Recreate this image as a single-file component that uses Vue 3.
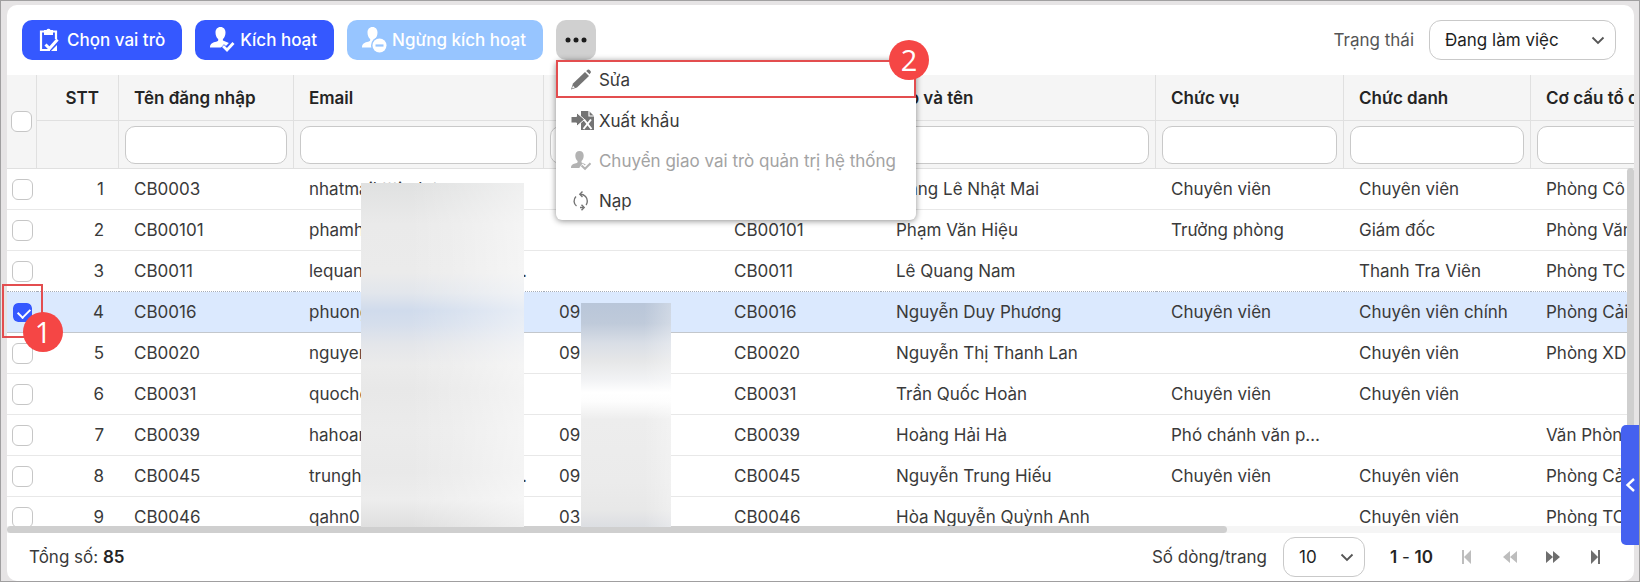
<script setup>
import { ref } from 'vue'

const status = ref('Đang làm việc')
const pageSize = ref('10')

const columns = [
  { key: 'login', label: 'Tên đăng nhập', cls: 'c-login' },
  { key: 'email', label: 'Email', cls: 'c-email' },
  { key: 'phone', label: '', cls: 'c-phone' },
  { key: 'code', label: '', cls: 'c-code' },
  { key: 'name', label: 'Họ và tên', cls: 'c-name' },
  { key: 'position', label: 'Chức vụ', cls: 'c-position' },
  { key: 'title', label: 'Chức danh', cls: 'c-title' },
  { key: 'unit', label: 'Cơ cấu tổ chức', cls: 'c-unit' },
]

const rows = ref([
  { code: 'CB0003', email: 'nhatmaiktttindvt', phone: '', name: 'Đặng Lê Nhật Mai', position: 'Chuyên viên', title: 'Chuyên viên', unit: 'Phòng Cô' },
  { code: 'CB00101', email: 'phamh', phone: '', name: 'Phạm Văn Hiệu', position: 'Trưởng phòng', title: 'Giám đốc', unit: 'Phòng Văn' },
  { code: 'CB0011', email: 'lequan', cut: true, phone: '', name: 'Lê Quang Nam', position: '', title: 'Thanh Tra Viên', unit: 'Phòng TC' },
  { code: 'CB0016', email: 'phuong', phone: '09', name: 'Nguyễn Duy Phương', position: 'Chuyên viên', title: 'Chuyên viên chính', unit: 'Phòng Cải', selected: true },
  { code: 'CB0020', email: 'nguyen', phone: '09', name: 'Nguyễn Thị Thanh Lan', position: '', title: 'Chuyên viên', unit: 'Phòng XD' },
  { code: 'CB0031', email: 'quocho', phone: '', name: 'Trần Quốc Hoàn', position: 'Chuyên viên', title: 'Chuyên viên', unit: '' },
  { code: 'CB0039', email: 'hahoan', phone: '09', name: 'Hoàng Hải Hà', position: 'Phó chánh văn phòng', title: '', unit: 'Văn Phòng' },
  { code: 'CB0045', email: 'trungh', cut: true, phone: '09', name: 'Nguyễn Trung Hiếu', position: 'Chuyên viên', title: 'Chuyên viên', unit: 'Phòng Cải' },
  { code: 'CB0046', email: 'qahn0', phone: '03', name: 'Hòa Nguyễn Quỳnh Anh', position: '', title: 'Chuyên viên', unit: 'Phòng TC' },
])
</script>

<template>
  <div class="page">
    <main class="card">
      <div class="toolbar">
        <button class="btn" type="button">
          <svg class="ico-clip" width="20" height="26" viewBox="0 0 20 26">
            <path d="M5 4.500H2V23h9M13.500 4.500H17V12" fill="none" stroke="#fff" stroke-width="2.200" />
            <path d="M5 3h2.500a2.200 2.200 0 0 1 4 0H14v5H5z" fill="#fff" />
            <path d="M6.500 17.500l4 4L18.500 12.500" fill="none" stroke="#fff" stroke-width="3" />
            <path d="M12 24l6-6v6z" fill="#fff" />
          </svg>
          <span>Chọn vai trò</span>
        </button>
        <button class="btn" type="button">
          <svg width="25" height="26" viewBox="0 0 25 26">
            <path d="M10.500 0c3.200 0 5 2.400 5 5.500 0 2.800-1 5.300-2.600 6.600v1.400l6 2.500-4.400 4.500H0c0-3.500 2-4.600 5-5.500 1.700-.5 3.200-.8 3.200-1.800v-1.100C6.500 10.800 5.500 8.300 5.500 5.500 5.500 2.400 7.300 0 10.500 0z" fill="#fff" />
            <path d="M12 19.500l4.800 4L23.500 16" fill="none" stroke="#3558ff" stroke-width="6" />
            <path d="M13 19l4 4L23.500 16" fill="none" stroke="#fff" stroke-width="2.800" />
          </svg>
          <span>Kích hoạt</span>
        </button>
        <button class="btn btn-off" type="button" disabled>
          <svg width="25" height="26" viewBox="0 0 25 26">
            <path d="M10.500 0c3.200 0 5 2.400 5 5.500 0 2.800-1 5.300-2.600 6.600v1.400l3 4-4 3H0c0-3.500 2-4.600 5-5.500 1.700-.5 3.200-.8 3.200-1.800v-1.100C6.500 10.800 5.500 8.300 5.500 5.500 5.500 2.400 7.300 0 10.500 0z" fill="#fff" />
            <circle cx="17.500" cy="18.500" r="8.500" fill="#97c5ff" />
            <circle cx="17.500" cy="18.500" r="7" fill="#fff" />
            <path d="M13.500 18.500h8" stroke="#97c5ff" stroke-width="2.200" />
          </svg>
          <span>Ngừng kích hoạt</span>
        </button>
        <div class="more-wrap">
          <button class="more" type="button" aria-label="Thêm">
            <svg width="22" height="6" viewBox="0 0 22 6" fill="#1c1c1c">
              <circle cx="3" cy="3" r="2.500" /><circle cx="11" cy="3" r="2.500" /><circle cx="19" cy="3" r="2.500" />
            </svg>
          </button>
          <div class="menu">
            <button type="button" class="marked">
              <svg width="24" height="22" viewBox="0 0 24 22" fill="#747474">
                <path d="M0 20.500l2-6L14 3l4 4L6 18.500z" />
                <path d="M15.200 1.900L17 .6c1-.7 3.500 1.800 2.800 3l-1.200 1.700z" />
                <path d="M.9 19.600l1.100-2.900 1.800 1.800z" fill="#fff" />
              </svg>
              <span>Sửa</span>
              <b class="badge badge-2">2</b>
            </button>
            <button type="button">
              <svg width="24" height="22" viewBox="0 0 24 22">
                <path d="M10 1h8l5 5v14H10z" fill="#747474" />
                <path d="M18 1v5h5" fill="none" stroke="#fff" stroke-width="1.200" />
                <path d="M0 6.500h5.500V2.500L13.500 9.500l-8 7V13H0z" fill="#747474" stroke="#fff" stroke-width="1" />
                <path d="M13 9.500l7.500 9.500M20 9.500L12.500 19" stroke="#fff" stroke-width="2" />
              </svg>
              <span>Xuất khẩu</span>
            </button>
            <button type="button" disabled>
              <svg width="24" height="22" viewBox="0 0 24 22">
                <path d="M8.500 1c2.700 0 4.200 2 4.200 4.600 0 2.300-.8 4.300-2.200 5.400v1.500l4.500 2-3 3.500H0c0-3 1.700-3.700 4-4.400 1.400-.4 2.600-.7 2.600-1.500V11C5.200 9.900 4.300 7.900 4.300 5.600 4.300 3 5.800 1 8.500 1z" fill="#b3b3b3" />
                <path d="M10 15.500l4 3.500 5.500-6" fill="none" stroke="#fff" stroke-width="5" />
                <path d="M10.500 15.500l3.500 3.300 5.500-5.600" fill="none" stroke="#b3b3b3" stroke-width="2" />
              </svg>
              <span>Chuyển giao vai trò quản trị hệ thống</span>
            </button>
            <button type="button">
              <svg width="24" height="22" viewBox="0 0 24 22" fill="none" stroke="#747474" stroke-width="1.400">
                <path d="M5.500 16A6.200 6.200 0 0 1 5 6.600M9 4.300c5 0 7.300 3.400 7.300 6.700 0 1.500-.4 3-1.200 4M12.500 17.500H9" />
                <path d="M11.500 1.500L8.800 4.300l2.700 2.800M10.500 14.700l2.700 2.800-2.700 2.800" />
              </svg>
              <span>Nạp</span>
            </button>
          </div>
        </div>
        <div class="status">
          <label for="status">Trạng thái</label>
          <div class="select">
            <select id="status" v-model="status"><option>Đang làm việc</option></select>
            <svg width="14" height="9" viewBox="0 0 14 9"><path d="M1.500 1.500L7 7l5.500-5.500" fill="none" stroke="#555" stroke-width="1.800" /></svg>
          </div>
        </div>
      </div>

      <div class="grid">
        <div class="viewport">
          <table>
            <colgroup>
              <col class="c-check"><col class="c-stt"><col v-for="c in columns" :key="c.key" :class="c.cls">
            </colgroup>
            <thead>
              <tr class="labels">
                <th rowspan="2" class="check"><input type="checkbox" aria-label="Chọn tất cả"></th>
                <th class="stt">STT</th>
                <th v-for="c in columns" :key="c.key" scope="col">{{ c.label }}</th>
              </tr>
              <tr class="filters">
                <td></td>
                <td v-for="c in columns" :key="c.key"><input type="text" :aria-label="'Lọc ' + (c.label || c.key)"></td>
              </tr>
            </thead>
            <tbody>
              <tr v-for="(r, i) in rows" :key="r.code" :class="{ selected: r.selected, before: i === 2 }">
                <td class="check"><input v-model="r.selected" type="checkbox" :aria-label="'Chọn ' + r.code"></td>
                <td class="stt">{{ i + 1 }}</td>
                <td>{{ r.code }}</td>
                <td><div class="email"><span>{{ r.email }}</span><span v-if="r.cut">.</span></div></td>
                <td>{{ r.phone }}</td>
                <td>{{ r.code }}</td>
                <td>{{ r.name }}</td>
                <td>{{ r.position }}</td>
                <td>{{ r.title }}</td>
                <td>{{ r.unit }}</td>
              </tr>
            </tbody>
          </table>
        </div>
        <div class="mask mask-email"></div>
        <div class="mask mask-phone"></div>
        <div class="vbar"></div>
        <div class="row-mark"><b class="badge badge-1">1</b></div>
      </div>
      <div class="hbar"><div class="thumb"></div></div>

      <footer>
        <div>Tổng số: <b>85</b></div>
        <div class="pager">
          <label for="size">Số dòng/trang</label>
          <div class="select small">
            <select id="size" v-model="pageSize"><option>10</option></select>
            <svg width="14" height="9" viewBox="0 0 14 9"><path d="M1.500 1.500L7 7l5.500-5.500" fill="none" stroke="#555" stroke-width="1.800" /></svg>
          </div>
          <div class="range"><b>1</b> - <b>10</b></div>
          <div class="nav">
            <button type="button" disabled aria-label="Trang đầu">
              <svg width="14" height="14" viewBox="0 0 14 14" fill="#bdbdbd"><path d="M2 0h2v14H2zM11 0v14L4 7z" /></svg>
            </button>
            <button type="button" disabled aria-label="Trang trước">
              <svg width="14" height="14" viewBox="0 0 14 14" fill="#bdbdbd"><path d="M7 1v12L0 7zM14 1v12L7 7z" /></svg>
            </button>
            <button type="button" aria-label="Trang sau">
              <svg width="14" height="14" viewBox="0 0 14 14" fill="#6e6e6e"><path d="M0 1v12l7-6zM7 1v12l7-6z" /></svg>
            </button>
            <button type="button" aria-label="Trang cuối">
              <svg width="14" height="14" viewBox="0 0 14 14" fill="#6e6e6e"><path d="M9 0h2v14H9zM2 0v14l7-7z" /></svg>
            </button>
          </div>
        </div>
      </footer>
    </main>
    <button class="drawer" type="button" aria-label="Mở bảng bên">
      <svg width="10" height="14" viewBox="0 0 10 14"><path d="M9 1L2.500 7 9 13" fill="none" stroke="#fff" stroke-width="2.400" /></svg>
    </button>
  </div>
</template>

<style>
body { margin: 0; }
</style>

<style scoped>
* { box-sizing: border-box; }
.page {
  position: relative;
  height: 100vh;
  min-height: 320px;
  padding: 4px 5px 0 6px;
  border: 1px solid #a09fa0;
  background: #e6e4e5;
  overflow: hidden;
  font: 400 17px/24px Inter, "Noto Sans", sans-serif;
  color: #3a3a3a;
}
button, input, select { font: inherit; color: inherit; margin: 0; }
.card { height: 100%; display: flex; flex-direction: column; background: #fff; border-radius: 10px; }
.toolbar { display: flex; align-items: center; gap: 13px; padding: 15px 18px 15px 15px; flex: none; }
.btn {
  display: flex; align-items: center; gap: 5px; height: 40px; padding: 0 17px 0 15px; border: 0; border-radius: 10px;
  background: #3558ff; color: #fff; font-weight: 500; white-space: nowrap;
}
.btn-off { background: #97c5ff; }
.ico-clip { margin: 0 3px 0 2px; }
.more-wrap { position: relative; }
.more { display: flex; align-items: center; justify-content: center; width: 40px; height: 40px; padding: 0; border: 0; border-radius: 10px; background: #d0d0d0; }
.menu {
  position: absolute; z-index: 5; top: 100%; left: 0; width: 360px; background: #fff; border-radius: 6px;
  box-shadow: 0 1px 6px rgba(0, 0, 0, .45);
}
.menu button { position: relative; display: flex; align-items: center; gap: 4px; width: 100%; height: 40px; padding: 2px 13px 0; border: 2px solid transparent; background: none; white-space: nowrap; }
.menu button:disabled { color: #a3a3a3; }
.menu button.marked { height: 38px; margin-bottom: 2px; border-color: #e34d4f; }
.badge { position: absolute; width: 40px; height: 40px; border-radius: 50%; background: #f54645; color: #fff; font: 400 29px/40px "Open Sans", "Liberation Sans", sans-serif; text-align: center; }
.badge-2 { right: -15px; top: -22px; }
.badge-1 { left: 19px; top: 26px; }
.status { margin-left: auto; display: flex; align-items: center; gap: 15px; color: #555; white-space: nowrap; }
.select { position: relative; width: 187px; color: #1f1f1f; }
.select select { display: block; width: 100%; height: 40px; padding: 0 32px 0 15px; border: 1px solid #c9c9c9; border-radius: 12px; background: #fff; appearance: none; }
.select svg { position: absolute; right: 11px; top: 16px; pointer-events: none; }
.small { width: 82px; }

.grid { position: relative; flex: 1; min-height: 0; }
.viewport { height: 100%; overflow: hidden; }
table { table-layout: fixed; width: 2151px; border-collapse: separate; border-spacing: 0; }
.c-check { width: 30px; }
.c-stt { width: 82px; }
.c-login { width: 175px; }
.c-email { width: 250px; }
.c-phone { width: 175px; }
.c-code { width: 162px; }
.c-name { width: 275px; }
.c-position { width: 188px; }
.c-title { width: 187px; }
th, td { padding: 0 14px 0 15px; text-align: left; overflow: hidden; white-space: nowrap; text-overflow: ellipsis; }
thead th, thead td { background: #f5f5f5; border-right: 1px solid #e0e0e0; border-bottom: 1px solid #e0e0e0; }
thead th { font-weight: 600; }
.labels { height: 46px; }
.filters { height: 48px; }
.filters td { padding: 0 6px; }
.filters input { display: block; width: 100%; height: 38px; padding: 0 10px; border: 1px solid #c9c9c9; border-radius: 10px; background: #fff; }
.check, thead th.check { padding: 0 0 0 5px; }
thead th.check { padding-left: 4px; }
.stt { text-align: right; padding-right: 15px; }
th.stt { padding-right: 19px; }
tbody tr { height: 41px; }
tbody td { height: 41px; border-bottom: 1px solid #e8e8e8; }
.before td { border-bottom: 1px dotted #a5acb8; }
.selected td { background: #dbe9fe; border-bottom-color: #c3c7cc; }
.email { display: flex; justify-content: space-between; margin-right: 3px; }
input[type="checkbox"] { display: block; appearance: none; width: 21px; height: 21px; border: 1px solid #c6c6c6; border-radius: 6px; background: #fff; }
input[type="checkbox"]:checked { position: relative; border-color: #dbe9fe; background: #3558ff; background-clip: padding-box; }
input[type="checkbox"]:checked::after { content: ""; position: absolute; left: 5px; top: 5px; width: 10px; height: 6px; border: solid #fff; border-width: 0 0 2px 2px; transform: rotate(-45deg); }
.mask { position: absolute; bottom: -1px; }
.mask-email {
  left: 354px; width: 163px; top: 108px;
  background:
    linear-gradient(90deg, transparent 30%, rgba(255, 255, 255, .2) 60%, rgba(255, 255, 255, .5)),
    linear-gradient(180deg, #e0e1e1 0, #eaeaea 12%, #ebebeb 26%, #e2e6ec 32%, #d0dbec 37%, #d5deec 41%, #e4e6ea 47%, #ebebeb 53%, #e8e8e8 60%, #ebebeb 72%, #e9e9e9 84%, #ededed 92%, #dfdfdf 100%);
}
.mask-phone {
  left: 574px; width: 90px; top: 228px;
  background:
    linear-gradient(90deg, transparent 70%, rgba(255, 255, 255, .3)),
    linear-gradient(180deg, #b9c6d9 0, #bfcada 9%, #d9dee6 18%, #e6e7e8 26%, #f1f2f4 34%, #fff 40%, #fdfdfd 44%, #ededed 52%, #ebebeb 80%, #e8e8e8 92%, #dcdee2 100%);
}
thead th, footer b, .range { color: #242424; }
.vbar { position: absolute; right: 0; top: 93px; bottom: 0; width: 7px; border-radius: 4px 4px 0 0; background: #cfcfcf; }
.row-mark { position: absolute; left: -5px; top: 209px; width: 41px; height: 54px; border: 2px solid #e34d4f; }
.hbar { flex: none; height: 7px; background: #f5f5f5; }
.thumb { width: 75%; height: 7px; border-radius: 4px; background: #cfcfcf; }

footer { flex: none; height: 48px; display: flex; align-items: center; justify-content: space-between; padding: 0 24px 0 22px; white-space: nowrap; }
footer b { font-weight: 600; }
.pager { display: flex; align-items: center; }
.pager label { margin-right: 16px; }
.range { margin-left: 25px; }
.nav { display: flex; gap: 15px; margin-left: 20px; }
.nav button { display: flex; align-items: center; justify-content: center; width: 28px; height: 28px; padding: 0; border: 0; background: none; }
.drawer { position: absolute; right: 0; top: 424px; width: 18px; height: 120px; padding: 0; border: 0; border-radius: 5px 0 0 5px; background: #4561f0; display: flex; align-items: center; justify-content: center; }
</style>
